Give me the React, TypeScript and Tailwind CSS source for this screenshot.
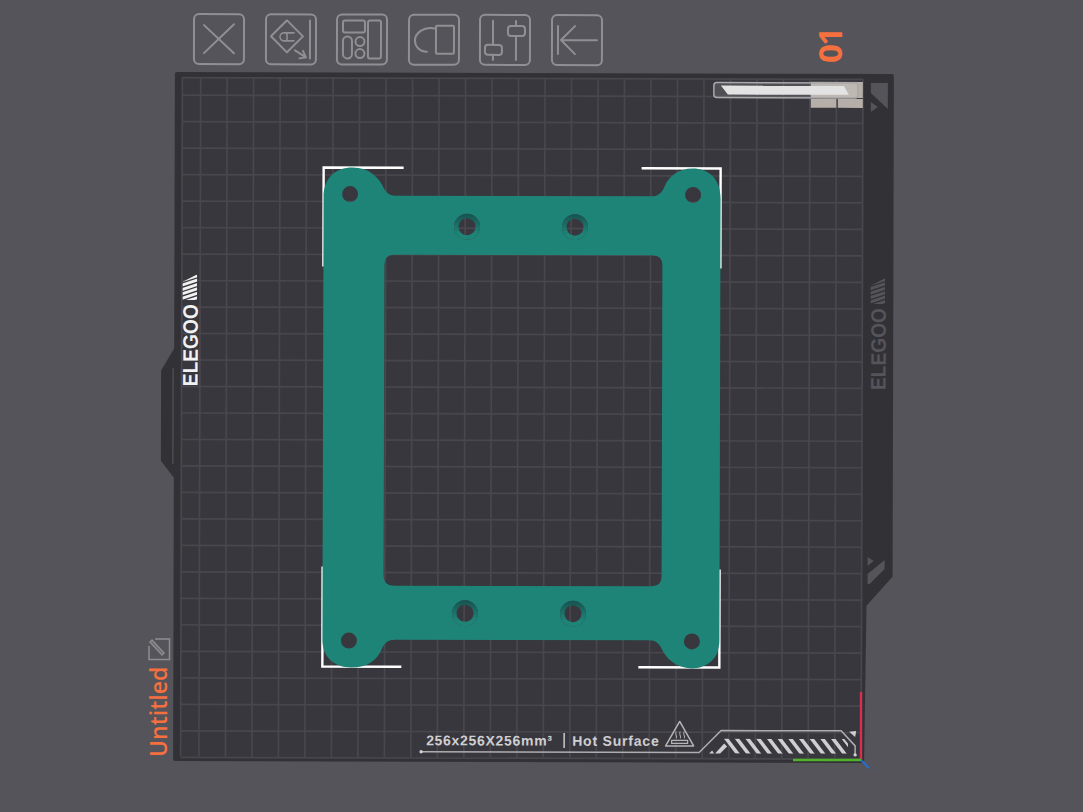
const BED = "#323136";
const CELL = "#38373d";
const LINE = "#48474d";
const TEAL = "#1f8478";
const STROKE = "#908f93";

const xLines = [181.5, ...Array.from({ length: 26 }, (_, i) => 199.8 + i * 26.49)];
const yLines = [78.5, ...Array.from({ length: 26 }, (_, i) => 96 + i * 26.49)];

const circle = (cx: number, cy: number, r: number) =>
  `M${cx - r} ${cy}a${r} ${r} 0 1 0 ${r * 2} 0a${r} ${r} 0 1 0 ${-r * 2} 0Z`;

const plateOutline =
  "M323 198C323 178 335 168 352 168C368 168 377 177 382 186C385 193 389 196 396 196L650 196C657 196 661 193 664 186C668 176 678 168 692 168C708 168 720 178 720 198L720 640C720 658 708 668 692 668C677 668 667 658 663 650C660 643 656 640 650 640L396 640C389 640 385 643 382 650C378 660 368 668 352 668C335 668 323 658 323 640Z";
const plateWindow =
  "M394 255L652 255Q662 255 662 265L662 576Q662 586 652 586L394 586Q384 586 384 576L384 265Q384 255 394 255Z";
const cornerHoles = [
  [349.5, 194.5],
  [692.5, 194.5],
  [349.5, 641],
  [692.5, 641],
];
const midHoles = [
  [466.5, 226.8],
  [574.5, 227],
  [465.5, 613.5],
  [573.5, 613.5],
];
const platePath =
  plateOutline +
  plateWindow +
  cornerHoles.map(([x, y]) => circle(x, y, 8)).join("") +
  midHoles.map(([x, y]) => circle(x, y, 13)).join("");

function ToolIcon({ children }: { children: React.ReactNode }) {
  return (
    <div className="h-[52px] w-[52px] rounded-[6px] border-2 border-[#908f93]">
      <svg
        viewBox="2 2 48 48"
        className="h-full w-full"
        fill="none"
        stroke={STROKE}
        strokeWidth="2"
        strokeLinecap="round"
        strokeLinejoin="round"
      >
        {children}
      </svg>
    </div>
  );
}

function Toolbar() {
  return (
    <div className="flex h-[65px] rotate-[0.15deg] items-start gap-[19.6px] pl-[193px] pt-[13.5px]">
      <ToolIcon>
        <path d="M11 12L41 40M41 11L11 40" />
      </ToolIcon>
      <ToolIcon>
        <path d="M22 7L38 23L22 39L6 23Z" />
        <path d="M19 19.5H29M19 27.5H29M22 19.5V27.5M19 19.5A4 4 0 0 0 19 27.5" strokeWidth="1.6" />
        <path d="M45 7V45M30 37L41 44M34.5 45L41 44L38 37.5" />
      </ToolIcon>
      <ToolIcon>
        <rect x="7" y="7" width="22" height="12" rx="2" />
        <rect x="32" y="7" width="13" height="38" rx="2" />
        <rect x="7" y="23" width="9" height="22" rx="4.5" />
        <circle cx="24" cy="28" r="4.5" />
        <circle cx="24" cy="40" r="4.5" />
      </ToolIcon>
      <ToolIcon>
        <rect x="28" y="12" width="18" height="28" rx="1" />
        <path d="M28 15C15 12 7 20 7 27C7 33 12 38 19 38" />
      </ToolIcon>
      <ToolIcon>
        <path d="M14 7V31M14 41V46M37 7V12M37 22V46" />
        <rect x="6" y="31" width="17" height="10" rx="3" />
        <rect x="29" y="12" width="17" height="10" rx="3" />
      </ToolIcon>
      <ToolIcon>
        <path d="M7 12V40M10 26H46M24 12L10 26L24 40" />
      </ToolIcon>
    </div>
  );
}

function ElegooMark({ id, x, y, color }: { id: string; x: number; y: number; color: string }) {
  // slanted stripes, clipped to a wedge
  const rows = [-4, 0.4, 4.8, 9.2, 13.6, 18, 22.4];
  return (
    <g fill={color}>
      <clipPath id={id}>
        <polygon points={`${x},${y} ${x + 15},${y} ${x + 15},${y - 26} ${x},${y - 18}`} />
      </clipPath>
      <g clipPath={`url(#${id})`}>
        {rows.map((d) => (
          <polygon
            key={d}
            points={`${x},${y - d} ${x + 15},${y - d - 5} ${x + 15},${y - d - 8} ${x},${y - d - 3}`}
          />
        ))}
      </g>
    </g>
  );
}

function Decal() {
  const stripes = Array.from({ length: 12 }, (_, i) => 724 + i * 10.7);
  return (
    <g>
      <text
        x="427"
        y="745.5"
        fontSize="14"
        fontWeight="700"
        fill="#cfced1"
        letterSpacing="0.7"
        className="font-['Liberation_Sans']"
      >
        256x256X256mm³
      </text>
      <path d="M565 733V748" stroke="#c9c8cb" strokeWidth="1.5" />
      <text
        x="573"
        y="745.5"
        fontSize="14"
        fontWeight="700"
        fill="#cfced1"
        letterSpacing="0.8"
        className="font-['Liberation_Sans']"
      >
        Hot Surface
      </text>
      <g fill="none" stroke="#b5b4b7" strokeWidth="1.5" strokeLinejoin="round">
        <path d="M680.5 721L694.5 745.5H666.5Z" />
        <path d="M672.5 740H688.5V743H672.5Z" strokeWidth="1.2" />
        <path d="M677 731Q676 733 677 735Q678 737 677 738M681 731Q680 733 681 735Q682 737 681 738M685 731Q684 733 685 735Q686 737 685 738" strokeWidth="1" />
      </g>
      <path
        d="M422 752L700 752L722 730L842 730L856 745L856 754"
        fill="none"
        stroke="#aeadb0"
        strokeWidth="1.5"
      />
      <circle cx="422" cy="752" r="1.7" fill="#d0cfd2" />
      <circle cx="856" cy="754" r="1.7" fill="#d0cfd2" />
      <polygon points="850,731 857,730 856,736" fill="#d0cfd2" />
      <polygon points="710,753 713,750 715,753" fill="#cfced1" />
      <polygon points="716,753 725,743 728,746 721,753" fill="#cfced1" />
      <clipPath id="hatch">
        <polygon points="725,738 845,738 849,743 849,753 717,753" />
      </clipPath>
      <g clipPath="url(#hatch)" fill="#cfced1">
        {stripes.map((x) => (
          <polygon key={x} points={`${x},737 ${x + 4.5},737 ${x + 17.5},754 ${x + 13},754`} />
        ))}
      </g>
    </g>
  );
}

function Bed() {
  return (
    <svg viewBox="0 65 1083 747" className="block h-[747px] w-[1083px]">
      <defs>
        <linearGradient id="bore" x1="0" y1="0" x2="0" y2="1">
          <stop offset="0" stopColor="#165250" />
          <stop offset="0.5" stopColor="#1c7369" />
          <stop offset="0.8" stopColor={TEAL} />
        </linearGradient>
      </defs>
      <g transform="rotate(0.15 520 415)">
        <polygon
          points="176,75 891,75 891,575 865,604 863,760 176,760 176,478 163,461 163,372 176,350"
          fill={BED}
          stroke={BED}
          strokeWidth="4"
          strokeLinejoin="round"
        />
        <rect x="181.5" y="78.5" width="681" height="679" fill={CELL} />
        <path d="M173 369V465" stroke="#4d4c52" strokeWidth="1.5" />
        {xLines.map((x) => (
          <path key={x} d={`M${x} 78.5V757.5`} stroke={LINE} strokeWidth="1.7" />
        ))}
        {yLines.map((y) => (
          <path key={y} d={`M181.5 ${y}H862.5`} stroke={LINE} strokeWidth="1.7" />
        ))}

        {/* top right purge area */}
        <rect x="810" y="81" width="52" height="16" fill="#b6afa9" />
        <rect x="810" y="98" width="25.5" height="9" fill="#b6afa9" />
        <rect x="837" y="98" width="25" height="9" fill="#b6afa9" />
        <rect x="713" y="82" width="144" height="15" rx="3" fill="#ffffff" fillOpacity="0.12" stroke="#a9a8ab" strokeWidth="1.5" />
        <polygon points="720,85 843,85 848,94 727,94" fill="#e3e3e4" />

        {/* strip markings */}
        <polygon points="870,82 887,82 887,108 870,92" fill="#55545a" />
        <polygon points="870,101 870,111 877,106" fill="#55545a" />
        <polygon points="868,556 874,560 868,565" fill="#55545a" />
        <polygon points="885,559 885,568 870,583 868,583 868,573" fill="#55545a" />

        <ElegooMark id="mark-left" x={182} y={301} color="#f1f1f2" />
        <text
          transform="translate(197.5 387) rotate(-90)"
          fontSize="21"
          fontWeight="700"
          fill="#f1f1f2"
          textLength="82"
          lengthAdjust="spacingAndGlyphs"
          className="font-['Liberation_Sans']"
        >
          ELEGOO
        </text>
        <ElegooMark id="mark-right" x={870} y={303} color="#55545a" />
        <text
          transform="translate(885.5 389) rotate(-90)"
          fontSize="21"
          fontWeight="700"
          fill="#55545a"
          textLength="82"
          lengthAdjust="spacingAndGlyphs"
          className="font-['Liberation_Sans']"
        >
          ELEGOO
        </text>

        <Decal />

        {/* bounding corners */}
        <path
          d="M323 267V168H403M641 168H720V268M323 567V667H402M639 667H720V569"
          fill="none"
          stroke="#ffffff"
          strokeWidth="2.4"
        />

        <path d={platePath} fill={TEAL} fillRule="evenodd" />
        {midHoles.map(([x, y]) => (
          <path
            key={x}
            d={circle(x, y, 13) + circle(x, y, 8.5)}
            fill="url(#bore)"
            fillRule="evenodd"
          />
        ))}
      </g>

      {/* axes */}
      <path d="M861 692V760" stroke="#d6304f" strokeWidth="2.4" />
      <path d="M793 760H861" stroke="#4fb32a" strokeWidth="2.4" />
      <path d="M861 760L869 768" stroke="#2470cc" strokeWidth="2" />

      {/* plate edit badge */}
      <g fill="none" stroke="#8d8c90" strokeWidth="1.5">
        <path d="M155 639H169.5V659.5H149V646" />
        <path d="M150 642L152 640L164 653L162 655Z" fill="#6a696e" />
      </g>
    </svg>
  );
}

export default function App() {
  return (
    <div className="relative h-[812px] w-[1083px] overflow-hidden bg-[#55545a]">
      <Toolbar />
      <Bed />
      <span className="absolute left-[812.7px] top-[63px] origin-top-left -rotate-90 font-['Open_Sans',sans-serif] text-[33px] font-bold leading-none tracking-[-0.05em] text-[#f6703f]">
        01
      </span>
      <span className="absolute left-[147px] top-[757px] origin-top-left -rotate-90 font-['Open_Sans',sans-serif] text-[23px] font-semibold leading-none text-[#f6703f]">
        Untitled
      </span>
    </div>
  );
}
